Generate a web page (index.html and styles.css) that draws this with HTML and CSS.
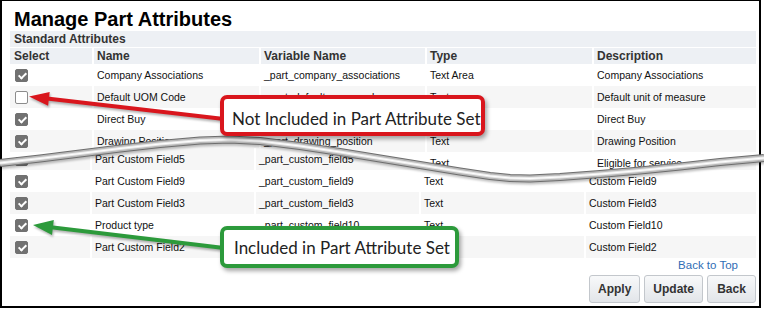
FILE: index.html
```html
<!DOCTYPE html>
<html lang="en">
<head>
    <meta charset="UTF-8">
    <title>Manage Part Attributes</title>
    <link rel="stylesheet" href="styles.css">
</head>
<body>
    <div class="shot">
        <div class="frame">
            <h1 class="title">Manage Part Attributes</h1>
            <div class="section">Standard Attributes</div>

            <div class="grid grid-head">
                <div class="cell sel">Select</div>
                <div class="cell">Name</div>
                <div class="cell">Variable Name</div>
                <div class="cell">Type</div>
                <div class="cell">Description</div>
            </div>

            <!-- top half of the list -->
            <div class="piece piece-top">
                <div class="grid row">
                    <div class="cell sel"><span class="cb on"></span></div>
                    <div class="cell">Company Associations</div>
                    <div class="cell">_part_company_associations</div>
                    <div class="cell">Text Area</div>
                    <div class="cell">Company Associations</div>
                </div>
                <div class="grid row alt">
                    <div class="cell sel"><span class="cb"></span></div>
                    <div class="cell">Default UOM Code</div>
                    <div class="cell">_part_default_uom_code</div>
                    <div class="cell">Text</div>
                    <div class="cell">Default unit of measure</div>
                </div>
                <div class="grid row">
                    <div class="cell sel"><span class="cb on"></span></div>
                    <div class="cell">Direct Buy</div>
                    <div class="cell">_part_direct_buy</div>
                    <div class="cell">Text</div>
                    <div class="cell">Direct Buy</div>
                </div>
                <div class="grid row alt">
                    <div class="cell sel"><span class="cb on"></span></div>
                    <div class="cell">Drawing Position</div>
                    <div class="cell">_part_drawing_position</div>
                    <div class="cell">Text</div>
                    <div class="cell">Drawing Position</div>
                </div>
                <div class="grid row">
                    <div class="cell sel"><span class="cb on"></span></div>
                    <div class="cell">Eligible for Service</div>
                    <div class="cell">_part_eligible_for_service</div>
                    <div class="cell">Text</div>
                    <div class="cell">Eligible for service</div>
                </div>
            </div>

            <!-- bottom half, cut along the tear -->
            <div class="piece piece-bottom">
                <div class="grid row alt">
                    <div class="cell sel"><span class="cb on"></span></div>
                    <div class="cell">Part Custom Field5</div>
                    <div class="cell">_part_custom_field5</div>
                    <div class="cell">Text</div>
                    <div class="cell">Custom Field5</div>
                </div>
                <div class="grid row">
                    <div class="cell sel"><span class="cb on"></span></div>
                    <div class="cell">Part Custom Field9</div>
                    <div class="cell">_part_custom_field9</div>
                    <div class="cell">Text</div>
                    <div class="cell">Custom Field9</div>
                </div>
                <div class="grid row alt">
                    <div class="cell sel"><span class="cb on"></span></div>
                    <div class="cell">Part Custom Field3</div>
                    <div class="cell">_part_custom_field3</div>
                    <div class="cell">Text</div>
                    <div class="cell">Custom Field3</div>
                </div>
                <div class="grid row">
                    <div class="cell sel"><span class="cb on"></span></div>
                    <div class="cell">Product type</div>
                    <div class="cell">_part_custom_field10</div>
                    <div class="cell">Text</div>
                    <div class="cell">Custom Field10</div>
                </div>
                <div class="grid row alt">
                    <div class="cell sel"><span class="cb on"></span></div>
                    <div class="cell">Part Custom Field2</div>
                    <div class="cell">_part_custom_field2</div>
                    <div class="cell">Text</div>
                    <div class="cell">Custom Field2</div>
                </div>
            </div>

            <div class="top-link"><a href="#">Back to Top</a></div>
            <div class="actions">
                <button class="btn">Apply</button>
                <button class="btn">Update</button>
                <button class="btn">Back</button>
            </div>
        </div>

        <svg class="marks" width="764" height="310" viewBox="0 0 764 310">
            <defs>
                <path id="tear-line" d="M0,163 L40,158.5 L80,153.5 L120,148.5 L160,144 L200,140.5 L230,139.5 L260,141 L300,146 L340,152 L380,158.5 L420,165 L460,171.5 L490,176 L510,178 L530,178.5 L560,177 L600,174 L640,170.5 L680,166.5 L720,162 L764,158"/>
            </defs>
            <g class="tear" fill="none" stroke-linejoin="round">
                <use href="#tear-line" stroke="#6e6e6e" stroke-width="8"/>
                <use href="#tear-line" stroke="#b8b8b8" stroke-width="6"/>
                <use href="#tear-line" stroke="#e8e8e8" stroke-width="3"/>
                <use href="#tear-line" stroke="#ffffff" stroke-width="1"/>
            </g>
            <g class="arrow">
                <line x1="47" y1="98.6" x2="224" y2="119" stroke="#d9161d" stroke-width="4"/>
                <polygon points="29,96.5 48.1,105.8 49.7,91.9" fill="#d9161d"/>
            </g>
            <g class="arrow">
                <line x1="51" y1="227.2" x2="224" y2="248" stroke="#2c9a3b" stroke-width="4"/>
                <polygon points="33,225 52,234.9 53.8,220" fill="#2c9a3b"/>
            </g>
        </svg>

        <div class="callout callout-red">Not Included in Part Attribute Set</div>
        <div class="callout callout-green">Included in Part Attribute Set</div>
    </div>
</body>
</html>
```

FILE: styles.css
```css
* {
    box-sizing: border-box;
}

body {
    margin: 0;
    background: #ffffff;
    font-family: "Liberation Sans", Arial, sans-serif;
    color: #111111;
}

.shot {
    position: relative;
    width: 764px;
    height: 310px;
    overflow: hidden;
}

.frame {
    width: 761px;
    height: 308px;
    border: solid #000000;
    border-width: 1px 2px 2px 2px;
    padding: 8px 3px 0 8px;
}

.title {
    margin: 0 0 2px 4px;
    font-size: 20px;
    line-height: 20px;
    font-weight: bold;
    color: #000000;
}

.section {
    height: 16px;
    line-height: 16px;
    margin-bottom: 1px;
    padding-left: 4px;
    background: #edf0f4;
    font-size: 12px;
    font-weight: bold;
    color: #333333;
}

.grid {
    display: grid;
    grid-template-columns: 82px 165px 164px 165px 1fr;
    column-gap: 2px;
}

.grid-head .cell {
    height: 16px;
    line-height: 16px;
    padding-left: 3px;
    background: #edf0f4;
    font-size: 12px;
    font-weight: bold;
    color: #333333;
}

.grid-head .cell.sel {
    padding-left: 4px;
}

.row {
    height: 22px;
}

.row .cell {
    display: flex;
    align-items: center;
    padding-left: 3px;
    background: #ffffff;
    font-size: 10.5px;
    white-space: nowrap;
    overflow: hidden;
}

.row.alt .cell {
    background: #f6f6f6;
}

.row .cell.sel {
    padding-left: 5px;
}

.piece-bottom {
    margin-top: -26px;
    background: #ffffff;
    clip-path: polygon(-10px 15px, 30px 10.5px, 70px 5.5px, 110px 0.5px, 150px -4px, 190px -7.5px, 220px -8.5px, 250px -7px, 290px -2px, 330px 4px, 370px 10.5px, 410px 17px, 450px 23.5px, 480px 28px, 500px 30px, 520px 30.5px, 550px 29px, 590px 26px, 630px 22.5px, 670px 18.5px, 710px 14px, 760px 10px, 760px 200px, -10px 200px);
}

.piece-bottom .grid {
    grid-template-columns: 80px 162px 163px 163px 1fr;
}

/* checkboxes */
.cb {
    position: relative;
    width: 13px;
    height: 13px;
    border: 1px solid #8c8c8c;
    border-radius: 2px;
    background: #ffffff;
}

.cb.on {
    background: #717171;
    border-color: #717171;
}

.cb.on::after {
    content: "";
    position: absolute;
    left: 3.5px;
    top: 1px;
    width: 3px;
    height: 6px;
    border: solid #ffffff;
    border-width: 0 2px 2px 0;
    transform: rotate(45deg);
}

.top-link {
    height: 15px;
    line-height: 15px;
    padding-right: 18px;
    text-align: right;
    font-size: 11.5px;
}

.top-link a {
    color: #2f6db5;
    text-decoration: none;
}

.actions {
    display: flex;
    justify-content: flex-end;
    gap: 4px;
    margin-top: 2px;
}

.btn {
    height: 28px;
    min-width: 49px;
    padding: 0 8px;
    border: 1px solid #c3c7cc;
    border-radius: 3px;
    background: linear-gradient(#f8f9fa, #e2e5e9);
    font-family: "Liberation Sans", Arial, sans-serif;
    font-size: 12px;
    font-weight: bold;
    color: #333333;
}

/* annotations drawn over the screenshot */
.marks {
    position: absolute;
    left: 0;
    top: 0;
    pointer-events: none;
}

.tear {
    filter: drop-shadow(1px 2px 1px rgba(0, 0, 0, 0.25));
}

.arrow {
    filter: drop-shadow(1px 2px 1px rgba(0, 0, 0, 0.3));
}

.callout {
    position: absolute;
    display: flex;
    align-items: center;
    border: 4px solid;
    border-radius: 7px;
    background: #ffffff;
    box-shadow: 2px 3px 4px rgba(0, 0, 0, 0.35);
    font-family: Lato, "Open Sans", sans-serif;
    font-size: 17px;
    color: #222222;
}

.callout-red {
    left: 220px;
    top: 95px;
    width: 265px;
    height: 41px;
    padding: 5px 0 0 8px;
    border-color: #d9161d;
}

.callout-green {
    left: 220px;
    top: 226px;
    width: 239px;
    height: 42px;
    padding-left: 10px;
    border-color: #2c9a3b;
}
```
